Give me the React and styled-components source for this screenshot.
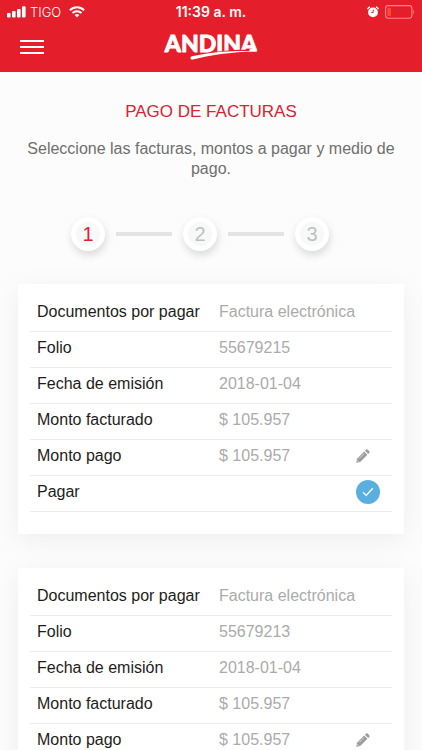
import React from "react";
import styled, { createGlobalStyle } from "styled-components";

const GlobalStyle = createGlobalStyle`
  *, *::before, *::after { box-sizing: border-box; }
  body {
    margin: 0;
    background: #fcfcfc;
    color: #1d1d1b;
    font: 16px/20px "Liberation Sans", Arial, sans-serif;
    overflow-x: hidden;
  }
`;

const Header = styled.header`
  background: #e51e2b;
  color: #fff;
  padding-bottom: 6px;
`;

const StatusBar = styled.div`
  display: grid;
  grid-template-columns: 1fr auto 1fr;
  align-items: center;
  height: 24px;
  padding: 0 7px;
  font-family: Inter, sans-serif;
  font-size: 13px;
  line-height: 16px;
`;

const StatusGroup = styled.div`
  display: flex;
  align-items: center;
  justify-content: ${(p) => (p.$end ? "flex-end" : "flex-start")};
  gap: ${(p) => (p.$end ? 6 : 4)}px;
`;

const Carrier = styled.span`
  font-weight: 300;
  margin-right: 4px;
`;

const Clock = styled.time`
  font-size: 14px;
  font-weight: 600;
`;

const NavBar = styled.nav`
  display: grid;
  grid-template-columns: 1fr auto 1fr;
  align-items: start;
  padding: 6px 20px 0;
`;

const MenuButton = styled.button`
  display: grid;
  gap: 4px;
  width: 24px;
  margin-top: 10px;
  padding: 0;
  border: 0;
  background: none;
  cursor: pointer;
`;

const MenuLine = styled.span`
  height: 2px;
  background: #fff;
`;

const LogoLink = styled.a`
  display: block;
  line-height: 0;
`;

const Main = styled.main`
  padding: 28px 18px 34px;
`;

const Title = styled.h1`
  margin: 0;
  color: #d9232e;
  font-size: 17px;
  line-height: 24px;
  font-weight: 400;
  text-align: center;
`;

const Intro = styled.p`
  margin: 15px 8px 0;
  color: #6f6f6f;
  text-align: center;
`;

const Steps = styled.ol`
  display: flex;
  justify-content: center;
  align-items: center;
  gap: 11px;
  margin: 38px 0 33px;
  padding: 0 22px 0 0;
  list-style: none;
`;

const Step = styled.li`
  display: grid;
  place-items: center;
  width: 34px;
  height: 34px;
  border: 5px solid #fff;
  border-radius: 50%;
  background: #f7f9f9;
  box-shadow: 1px 4px 8px rgba(0, 0, 0, 0.14);
  color: ${(p) => (p.$active ? "#dc2436" : "#bfbfbf")};
  font-size: 20px;
`;

const StepLine = styled.li`
  width: 56px;
  height: 4px;
  background: #e4e4e4;
`;

const Invoices = styled.div`
  display: grid;
  gap: 34px;
`;

const Card = styled.section`
  padding: 12px 12px 22px;
  background: #fff;
  box-shadow: 0 6px 26px rgba(0, 0, 0, 0.06);
`;

const Table = styled.table`
  width: 100%;
  table-layout: fixed;
  border-collapse: separate;
  border-spacing: 0;
`;

const Label = styled.th`
  width: 50%;
  height: 36px;
  padding: 0 0 3px 7px;
  border-bottom: 1px solid #ebebeb;
  color: #1d1d1b;
  font-weight: 400;
  text-align: left;
  white-space: nowrap;
`;

const Value = styled.td`
  height: 36px;
  padding: 0 12px 3px 8px;
  border-bottom: 1px solid #ebebeb;
  color: #ababab;
  white-space: nowrap;
`;

const ValueRow = styled.div`
  display: flex;
  align-items: center;
  justify-content: space-between;
`;

const ActionSlot = styled.span`
  display: flex;
  align-items: center;
  width: 24px;
  height: 24px;
  margin-left: auto;
`;

const EditButton = styled.button`
  display: flex;
  padding: 0;
  border: 0;
  background: none;
  color: #9b9b9b;
  cursor: pointer;
`;

const CheckWrap = styled.span`
  display: grid;
  width: 24px;
  height: 24px;
  > * { grid-area: 1 / 1; }
  > svg { place-self: center; pointer-events: none; opacity: 0; }
  > input:checked + svg { opacity: 1; }
`;

const CheckInput = styled.input`
  appearance: none;
  width: 24px;
  height: 24px;
  margin: 0;
  border: 2px solid #5aaee0;
  border-radius: 50%;
  cursor: pointer;
  &:checked { background: #5aaee0; }
`;

function Signal() {
  return (
    <svg width="19" height="12" viewBox="0 0 19 12" fill="#fff" aria-hidden="true">
      <rect x="0" y="7" width="3.6" height="4.5" rx="1" />
      <rect x="5" y="5" width="3.6" height="6.5" rx="1" />
      <rect x="10" y="3" width="3.6" height="8.5" rx="1" />
      <rect x="15" y="0.3" width="3.6" height="11.2" rx="1" />
    </svg>
  );
}

function Wifi() {
  return (
    <svg width="16" height="12" viewBox="0 0 16 12" fill="none" stroke="#fff" strokeWidth="2" aria-hidden="true">
      <path d="M.9 4.2a10.2 10.2 0 0 1 14.2 0" />
      <path d="M3.5 7a6.4 6.4 0 0 1 9 0" />
      <path d="M5.6 9.1a3.5 3.5 0 0 1 4.8 0L8 11.5z" fill="#fff" stroke="none" />
    </svg>
  );
}

function Alarm() {
  return (
    <svg width="12" height="12" viewBox="0 0 12 12" aria-hidden="true">
      <circle cx="6" cy="6.4" r="4.9" fill="#fff" />
      <path d="M.6 3.2A5 5 0 0 1 3 .9M11.4 3.2A5 5 0 0 0 9 .9" stroke="#fff" strokeWidth="1.4" fill="none" />
      <path d="M6.2 3.6v3H4.2" stroke="#e51e2b" strokeWidth="1" fill="none" />
    </svg>
  );
}

function Battery() {
  return (
    <svg width="30" height="14" viewBox="0 0 30 14" aria-hidden="true">
      <rect x="0.6" y="0.6" width="26.3" height="12.6" rx="2.6" fill="none" stroke="#f5868d" strokeWidth="1.1" />
      <rect x="2.4" y="2.8" width="3.6" height="8.2" rx="1" fill="#ff4a32" />
      <path d="M28.3 5v4c1.2-.4 1.2-3.6 0-4z" fill="#f5868d" />
    </svg>
  );
}

const LogoText = styled.text`
  font-family: Lato, sans-serif;
  font-weight: 900;
  font-size: 23px;
  fill: #fff;
  stroke: #fff;
  stroke-width: 0.8px;
  stroke-linejoin: round;
`;

function Logo() {
  return (
    <svg width="104" height="36" viewBox="0 0 104 36" role="img" aria-label="Andina">
      <LogoText x="52" y="21.5" textAnchor="middle">ANDINA</LogoText>
      <path d="M31 27C50 21.800 70 19.700 85 19.700L89 19.800L100 20.800V25L45 27z" fill="#e51e2b" />
      <path d="M33 26.200C49 22.600 69 20.200 97.500 21.200C71 22.200 51 25 34 29.600C31 30.100 30.500 26.900 33 26.200z" fill="#fff" />
      <path d="M91 18.800H97L98.200 21.800L90 21.600z" fill="#fff" />
    </svg>
  );
}

function Pencil() {
  return (
    <svg width="14" height="14" viewBox="0 0 14 14" fill="currentColor" aria-hidden="true">
      <path d="M.3 13.700L1 9.800L8.200 2.600L11.400 5.800L4.200 13z" />
      <path d="M9 1.800L10.200.6Q10.900 0 11.600.6L13.400 2.400Q14 3.100 13.400 3.800L12.200 5z" />
      <path d="M3.200 9.500L8.200 4.500M1.200 11.200L2.800 12.800" stroke="#fff" strokeWidth=".6" fill="none" />
    </svg>
  );
}

function Check() {
  return (
    <svg width="12" height="10" viewBox="0 0 12 10" fill="none" stroke="#fff" strokeWidth="1.3" aria-hidden="true">
      <path d="M1 5.300L4.200 8.400L10.800 1.200" />
    </svg>
  );
}

function Row({ label, children }) {
  return (
    <tr>
      <Label scope="row">{label}</Label>
      <Value>{children}</Value>
    </tr>
  );
}

function Invoice({ folio }) {
  const payId = `pagar-${folio}`;
  return (
    <Card aria-label={`Folio ${folio}`}>
      <Table>
        <tbody>
          <Row label="Documentos por pagar">Factura electrónica</Row>
          <Row label="Folio">{folio}</Row>
          <Row label="Fecha de emisión">2018-01-04</Row>
          <Row label="Monto facturado">$ 105.957</Row>
          <Row label="Monto pago">
            <ValueRow>
              $ 105.957
              <ActionSlot>
                <EditButton type="button" aria-label="Editar monto"><Pencil /></EditButton>
              </ActionSlot>
            </ValueRow>
          </Row>
          <Row label={<label htmlFor={payId}>Pagar</label>}>
            <ValueRow>
              <ActionSlot>
                <CheckWrap>
                  <CheckInput id={payId} type="checkbox" defaultChecked />
                  <Check />
                </CheckWrap>
              </ActionSlot>
            </ValueRow>
          </Row>
        </tbody>
      </Table>
    </Card>
  );
}

export default function App() {
  return (
    <>
      <GlobalStyle />
      <Header>
        <StatusBar>
          <StatusGroup>
            <Signal />
            <Carrier>TIGO</Carrier>
            <Wifi />
          </StatusGroup>
          <Clock>11:39 a. m.</Clock>
          <StatusGroup $end>
            <Alarm />
            <Battery />
          </StatusGroup>
        </StatusBar>
        <NavBar>
          <MenuButton type="button" aria-label="Menú">
            <MenuLine />
            <MenuLine />
            <MenuLine />
          </MenuButton>
          <LogoLink href="#"><Logo /></LogoLink>
        </NavBar>
      </Header>
      <Main>
        <Title>PAGO DE FACTURAS</Title>
        <Intro>Seleccione las facturas, montos a pagar y medio de pago.</Intro>
        <Steps>
          <Step $active aria-current="step">1</Step>
          <StepLine aria-hidden="true" />
          <Step>2</Step>
          <StepLine aria-hidden="true" />
          <Step>3</Step>
        </Steps>
        <Invoices>
          <Invoice folio="55679215" />
          <Invoice folio="55679213" />
        </Invoices>
      </Main>
    </>
  );
}
